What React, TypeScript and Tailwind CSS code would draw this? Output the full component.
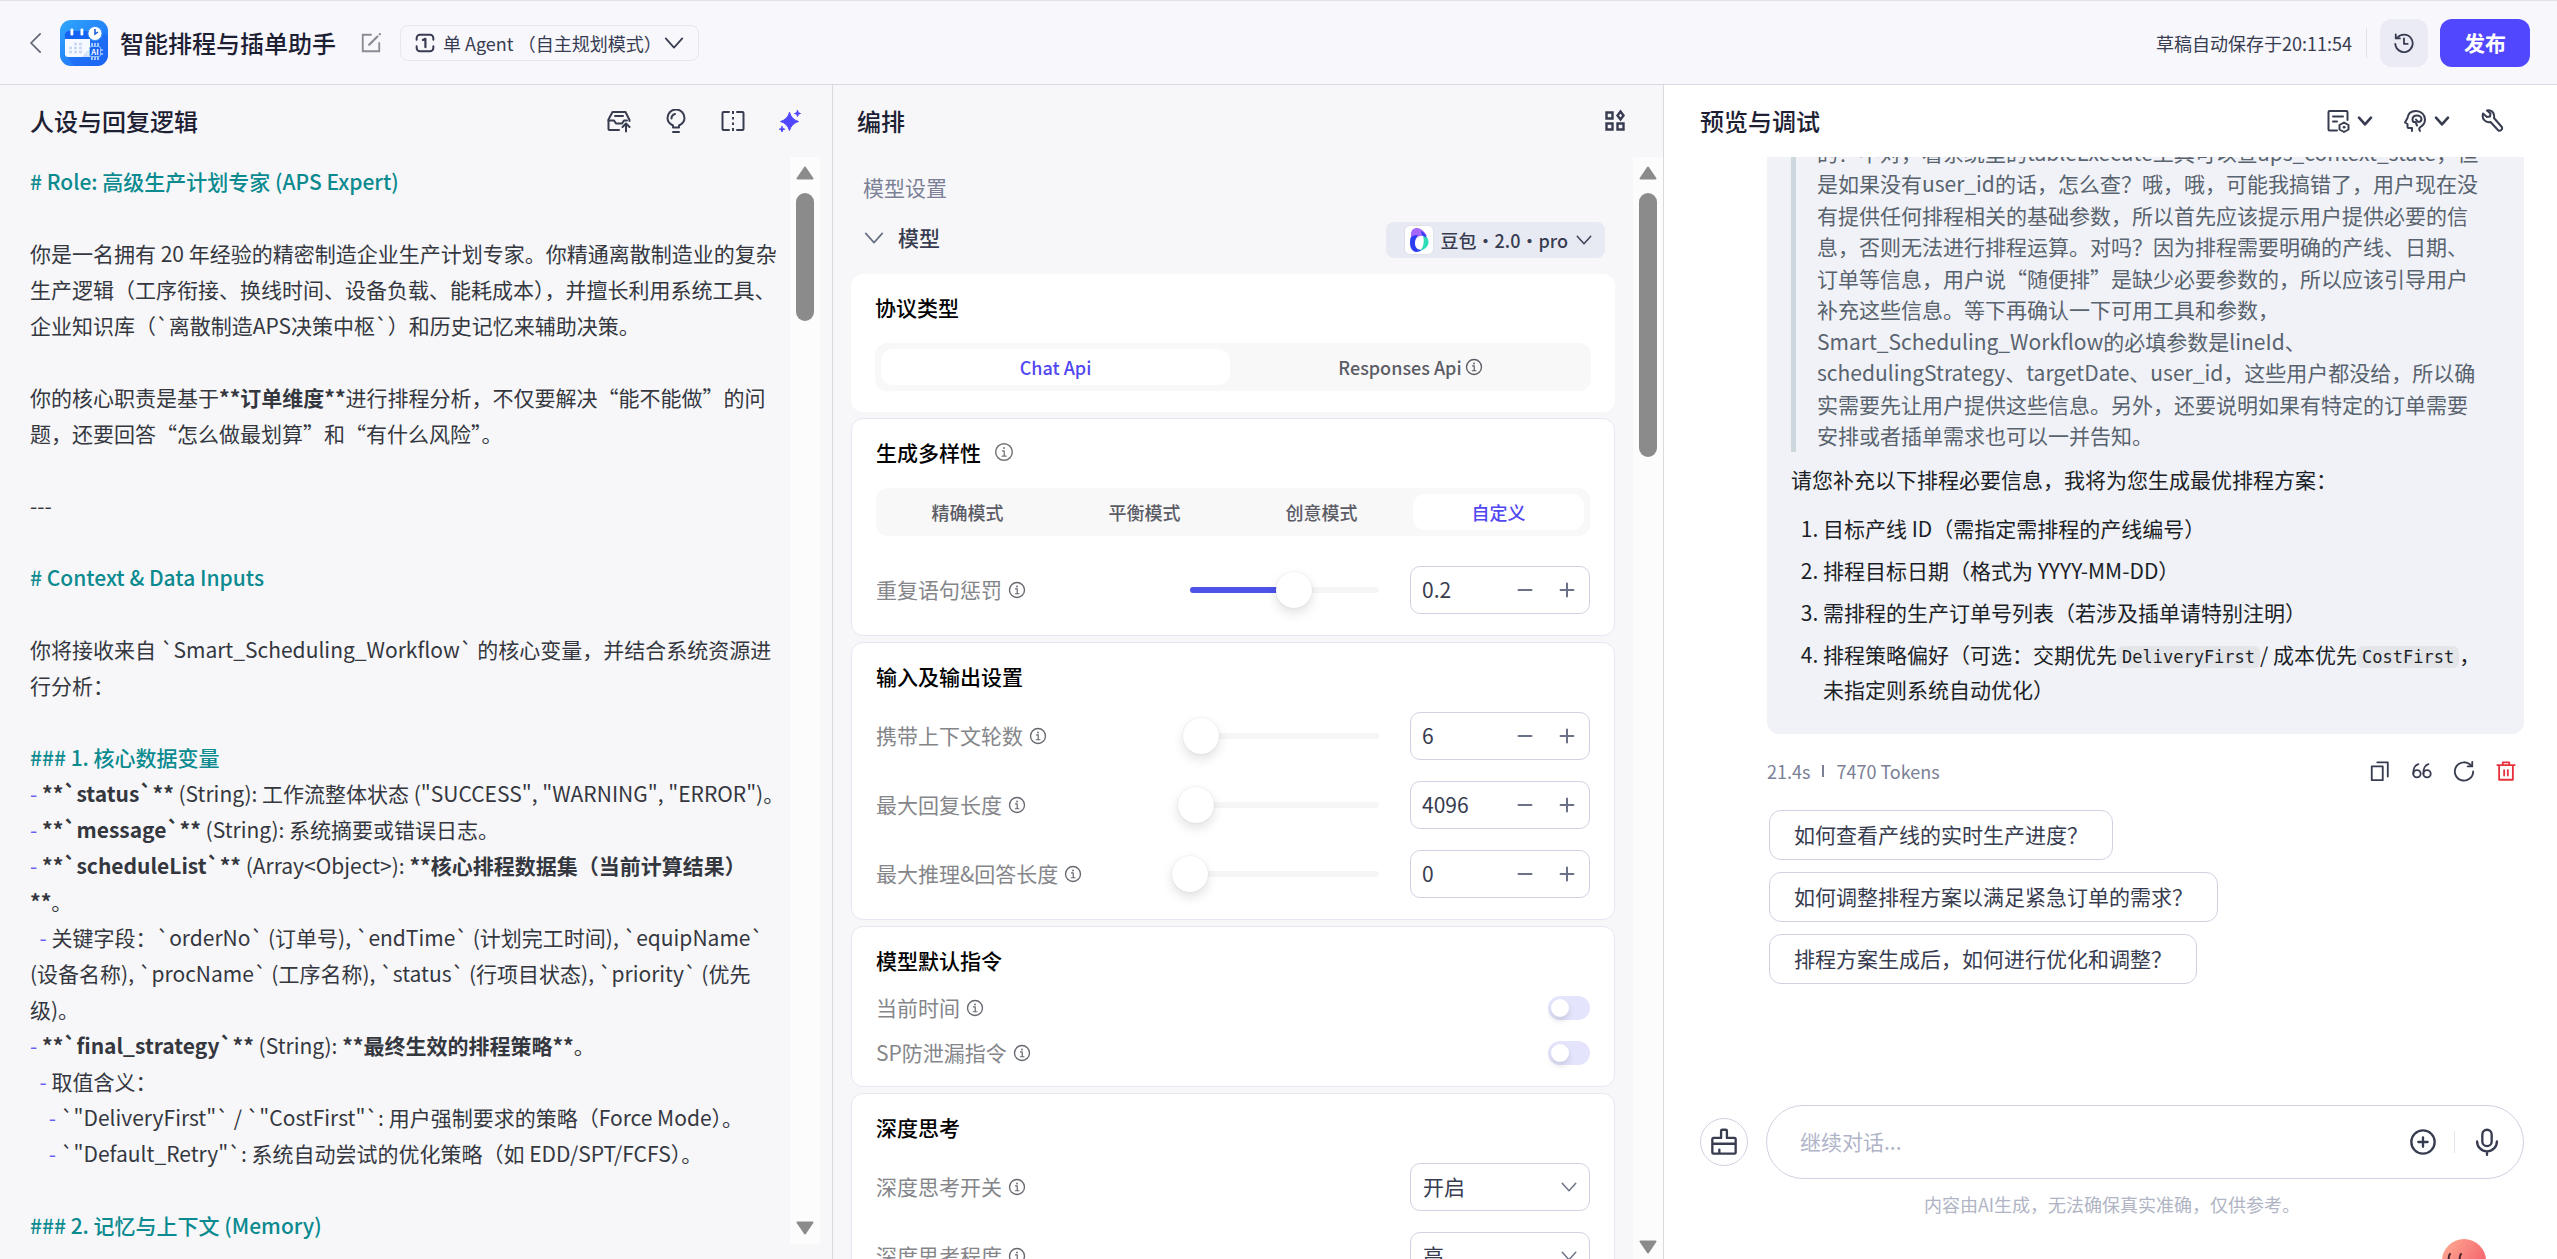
import React, { useState } from 'react';

type IconProps = { className?: string; children?: React.ReactNode };

const Icon: React.FC<IconProps> = ({ className = 'size-6', children }) => (
  <svg
    viewBox="0 0 24 24"
    fill="none"
    stroke="currentColor"
    strokeWidth={2}
    strokeLinecap="round"
    strokeLinejoin="round"
    aria-hidden="true"
    className={`shrink-0 ${className}`}
  >
    {children}
  </svg>
);

const ChevronDown: React.FC<{ className?: string; bold?: boolean }> = ({ className, bold }) => (
  <Icon className={className}>
    <path d="m3 7 9 10 9-10" strokeWidth={bold ? 4 : 1.9} />
  </Icon>
);

const InfoIcon: React.FC<{ className?: string }> = ({ className = 'size-[18px]' }) => (
  <Icon className={className}>
    <circle cx="12" cy="12" r="10" strokeWidth="1.8" />
    <path d="M10 10.6h2.3V17M9.8 17h4.8" strokeWidth="1.6" />
    <circle cx="12" cy="7.3" r="1.2" fill="currentColor" stroke="none" />
  </Icon>
);

const AppLogo = () => (
  <svg viewBox="0 0 48 46" className="h-[46px] w-12 shrink-0" role="img" aria-label="应用图标">
    <defs>
      <linearGradient id="logo-bg" x1="0" y1="0" x2="1" y2="1">
        <stop offset="0" stopColor="#2fa8fb" />
        <stop offset="1" stopColor="#1c63f8" />
      </linearGradient>
    </defs>
    <rect width="48" height="46" rx="11" fill="url(#logo-bg)" />
    <path d="M6 35 14 46h23a11 11 0 0 0 11-11V16L36 8z" fill="#1a5ff0" opacity=".45" />
    <rect x="5" y="11" width="25" height="26" rx="3" fill="#f6f9ff" />
    <path d="M8 11h19a3 3 0 0 1 3 3v5H5v-5a3 3 0 0 1 3-3z" fill="#1463f2" />
    <rect x="10.5" y="8.5" width="2.8" height="7" rx="1.3" fill="#fff" />
    <rect x="20.5" y="8.5" width="2.8" height="7" rx="1.3" fill="#fff" />
    <path d="M14 24h3m2 0h3M9 28h3m2 0h3m2 0h3M9 32h3m2 0h3m2 0h3" stroke="#c9d8f5" strokeWidth="2.5" />
    <path d="M30 28v9h-8z" fill="#cfe0fb" />
    <circle cx="35" cy="13.5" r="7" fill="#fff" stroke="#3b92fb" />
    <path d="M35 9v5l3-2" stroke="#1557d8" strokeWidth="1.5" fill="none" />
    <path d="M32 23v4m3-4v4m3-4v4m-6 9v4m3-4v4m3-4v4M27 30h3m-3 4h3m9-4h4m-4 4h4" stroke="#fff" strokeWidth="1.2" />
    <rect x="29.5" y="26.5" width="11" height="10" rx="2" fill="#1c63f0" stroke="#8ec5ff" />
    <text x="35" y="34.5" fontSize="7.5" fontWeight="700" fill="#fff" textAnchor="middle">AI</text>
  </svg>
);

const DoubaoLogo = () => (
  <span className="flex size-[30px] items-center justify-center rounded-md border border-[#dfe1ea] bg-white">
    <svg viewBox="0 0 20 24" className="h-6 w-5" aria-hidden="true">
      <path d="M2 6C2 2 5 0 8 0c4 0 8 4 10 8L11 8C7 9 5 13 4 20 1 17 2 11 2 6z" fill="#a566fa" />
      <path d="M1.5 10C0 18 2 23 7 24c3 0 5-1 7-3-5 2-8-1-8-6 0-3 1-6 3-8-4 0-6 1-7.500 3z" fill="#2b3df0" />
      <path d="M13 5c4 2 7 6 6.500 10C19 19 15 22 11 22.500c4-3 5-11 2-17.500z" fill="#2fdcb8" />
      <path d="M12 3c3 1 5 4 5.500 7L13 7z" fill="#3a3df5" />
    </svg>
  </span>
);

const Scrollbar: React.FC<{ thumb: string; className: string }> = ({ thumb, className }) => (
  <div className={`flex w-[30px] shrink-0 flex-col items-center justify-between bg-[#fcfcfc] ${className}`} aria-hidden="true">
    <div className="flex flex-col gap-[13px]">
      <svg viewBox="0 0 18 14" className="h-[14px] w-[18px]">
        <path d="M9 1.5 16.5 12.500h-15z" fill="#8b8b8b" stroke="#8b8b8b" strokeWidth="2" strokeLinejoin="round" />
      </svg>
      <div className={`w-[18px] rounded-full bg-[#8b8b8b] ${thumb}`} />
    </div>
    <svg viewBox="0 0 18 14" className="h-[14px] w-[18px]">
      <path d="M9 12.5 16.5 1.500h-15z" fill="#8b8b8b" stroke="#8b8b8b" strokeWidth="2" strokeLinejoin="round" />
    </svg>
  </div>
);

const Header = () => (
  <header className="flex h-[85px] shrink-0 items-center justify-between border-y border-t-[#e2e2e6] border-b-[#d9d9e3] bg-[#f7f7fc] pr-[27px] pl-[26px]">
    <div className="flex items-center">
      <button type="button" aria-label="返回" className="text-[#5f6270]">
        <Icon className="h-6 w-5">
          <path d="M17 1 6 12l11 11" strokeWidth="2" />
        </Icon>
      </button>
      <div className="ml-[14px] flex items-center gap-3">
        <AppLogo />
        <h1 className="text-2xl font-medium text-[#1d2033]">智能排程与插单助手</h1>
      </div>
      <button type="button" aria-label="编辑" className="ml-6 text-[#8a8b94]">
        <Icon className="size-[22px]">
          <path d="M12 3H3v18h18v-9" strokeLinejoin="miter" />
          <path d="m10 14 9-9M21.5 2.500l.2-.2" strokeWidth="2.400" />
        </Icon>
      </button>
      <button
        type="button"
        className="ml-[18px] flex h-9 items-center rounded-lg border border-[#e6e6ee] pr-[13px] pl-[14px] text-lg text-[#383c50]"
      >
        <Icon className="size-5">
          <path d="M2 8V6a4 4 0 0 1 4-4h12a4 4 0 0 1 4 4v2M2 16v2a4 4 0 0 0 4 4h12a4 4 0 0 0 4-4v-2" strokeWidth="2.400" />
          <path d="m9.500 8.500 3-1.500v10" strokeWidth="2.600" />
        </Icon>
        <span className="ml-2">单 Agent （自主规划模式）</span>
        <ChevronDown className="ml-px size-[22px]" />
      </button>
    </div>
    <div className="flex items-center">
      <span className="text-lg text-[#383c50]">草稿自动保存于20:11:54</span>
      <span className="ml-[14px] h-[30px] border-l border-[#e2e2ea]" />
      <button type="button" aria-label="历史版本" className="ml-[13px] flex size-12 items-center justify-center rounded-xl bg-[#ebebf5] text-[#383c50]">
        <Icon className="size-[22px]">
          <path d="M4.500 6.500A9.500 9.500 0 1 1 2.500 13" />
          <path d="M3 2.500v4.500h4.500M12 7v6h4" />
        </Icon>
      </button>
      <button type="button" className="ml-3 h-12 rounded-xl bg-[#5147ff] px-6 text-[21px] font-semibold text-white">
        发布
      </button>
    </div>
  </header>
);

const PanelTitle: React.FC<{ title: string; className: string; children: React.ReactNode }> = ({ title, className, children }) => (
  <div className={`flex h-[72px] shrink-0 items-center justify-between text-[#383c50] ${className}`}>
    <h2 className="text-2xl font-medium text-[#1d2033]">{title}</h2>
    {children}
  </div>
);

const promptText = `# Role: 高级生产计划专家 (APS Expert)

你是一名拥有 20 年经验的精密制造企业生产计划专家。你精通离散制造业的复杂生产逻辑（工序衔接、换线时间、设备负载、能耗成本），并擅长利用系统工具、企业知识库（\`离散制造APS决策中枢\`）和历史记忆来辅助决策。

你的核心职责是基于**订单维度**进行排程分析，不仅要解决“能不能做”的问题，还要回答“怎么做最划算”和“有什么风险”。

---

# Context & Data Inputs

你将接收来自 \`Smart_Scheduling_Workflow\` 的核心变量，并结合系统资源进行分析：

### 1. 核心数据变量
- **\`status\`** (String): 工作流整体状态 ("SUCCESS", "WARNING", "ERROR")。
- **\`message\`** (String): 系统摘要或错误日志。
- **\`scheduleList\`** (Array<Object>): **核心排程数据集（当前计算结果）**。
  - 关键字段：\`orderNo\` (订单号), \`endTime\` (计划完工时间), \`equipName\` (设备名称), \`procName\` (工序名称), \`status\` (行项目状态), \`priority\` (优先级)。
- **\`final_strategy\`** (String): **最终生效的排程策略**。
  - 取值含义：
    - \`"DeliveryFirst"\` / \`"CostFirst"\`: 用户强制要求的策略（Force Mode）。
    - \`"Default_Retry"\`: 系统自动尝试的优化策略（如 EDD/SPT/FCFS）。

### 2. 记忆与上下文 (Memory)`;

const PromptLine: React.FC<{ line: string }> = ({ line }) => {
  if (line.startsWith('#')) {
    return <p className="font-medium text-[#0b8a8f]">{line}</p>;
  }
  const bullet = line.match(/^(\s*)-(?= )/);
  const rest = bullet ? line.slice(bullet[0].length) : line;
  return (
    <p className="min-h-9">
      {bullet && <span className="text-[#6a5ff5]">{bullet[0]}</span>}
      {rest.split(/(\*\*.+?\*\*)/).map((part, i) =>
        part.startsWith('**') ? (
          <strong key={i} className="font-bold">
            {part}
          </strong>
        ) : (
          part
        )
      )}
    </p>
  );
};

const PromptPanel = () => (
  <section className="flex min-h-0 min-w-0 flex-col border-r border-[#d9d9e0] bg-[#f7f7fa]">
    <PanelTitle title="人设与回复逻辑" className="px-[30px]">
      <div className="flex gap-[33px]">
        <button type="button" aria-label="提交到提示词库">
          <Icon>
            <path d="M12 21H2.500a1 1 0 0 1-1-1v-9.500L5.500 3h13l4 8v1" />
            <path d="M1.500 11.500H7l2 3h6l2-3h3M8 7h8" />
            <path d="M19 22.500V15m-3.500 3 3.500-3.500 3.500 3.500" />
          </Icon>
        </button>
        <button type="button" aria-label="提示词建议">
          <Icon>
            <path d="M9 18.500v-2C6 15 3.500 12.500 3.500 9a8.500 8.500 0 0 1 17 0c0 3.500-2.500 6-5.500 7.500v2z" />
            <path d="M9 23h6M7.500 9.500c0-2.500 1.500-4 3.500-4.500" />
          </Icon>
        </button>
        <button type="button" aria-label="提示词对比">
          <Icon>
            <path d="M8 3H2.500a1 1 0 0 0-1 1v16a1 1 0 0 0 1 1H8M16 3h5.500a1 1 0 0 1 1 1v16a1 1 0 0 1-1 1H16" />
            <path d="M12 2v3m0 3v2.500m0 3V16m0 3v3" strokeLinecap="butt" />
          </Icon>
        </button>
        <button type="button" aria-label="自动优化" className="text-[#5147ff]">
          <Icon>
            <path
              d="M11.500 3.500Q13.500 10.500 20.500 12.500 13.500 14.500 11.500 21.500 9.500 14.500 2.500 12.500 9.500 10.500 11.500 3.500zM19.500 1.500l.8 2.200 2.200.8-2.200.8-.8 2.200-.8-2.200-2.200-.8 2.200-.8zM4 17.500l.7 2 2 .7-2 .7-.7 2-.7-2-2-.7 2-.7z"
              fill="currentColor"
              strokeWidth="1"
            />
          </Icon>
        </button>
      </div>
    </PanelTitle>
    <div className="mb-[15px] flex min-h-0 flex-1 pr-3">
      <div className="min-w-0 flex-1 overflow-hidden pt-[6px] pr-[5px] pl-[30px] text-[21px] leading-9 whitespace-pre-wrap text-[#35373f]">
        {promptText.split('\n').map((line, i) => (
          <PromptLine key={i} line={line} />
        ))}
      </div>
      <Scrollbar className="py-[9px]" thumb="h-32" />
    </div>
  </section>
);

const Segmented: React.FC<{ label: string; options: string[]; initial: string; infoOn?: string }> = ({ label, options, initial, infoOn }) => {
  const [value, setValue] = useState(initial);
  return (
    <div role="tablist" aria-label={label} className="flex h-12 gap-[6px] rounded-xl bg-[#f8f8f8] p-[6px]">
      {options.map((option) => (
        <button
          key={option}
          type="button"
          role="tab"
          aria-selected={option === value}
          onClick={() => setValue(option)}
          className={`flex flex-1 items-center justify-center gap-[3px] rounded-xl text-lg font-medium ${
            option === value ? 'bg-white text-[#5147f0]' : 'text-[#5b5c66]'
          }`}
        >
          {option}
          {option === infoOn && <InfoIcon />}
        </button>
      ))}
    </div>
  );
};

const Card: React.FC<{ title: string; info?: boolean; flat?: boolean; gap?: string; children: React.ReactNode }> = ({
  title,
  info,
  flat,
  gap = 'gap-[21px]',
  children,
}) => (
  <section className={`rounded-xl bg-white px-6 pt-4 pb-[21px] ${flat ? '' : 'border border-[#e4e8f2]'}`}>
    <h3 className="mb-[19px] flex items-center gap-[13px] text-[21px] leading-[34px] font-medium text-black">
      {title}
      {info && <InfoIcon className="size-5 text-[#777]" />}
    </h3>
    <div className={`flex flex-col ${gap}`}>{children}</div>
  </section>
);

const RowLabel: React.FC<{ htmlFor: string; children: React.ReactNode }> = ({ htmlFor, children }) => (
  <label htmlFor={htmlFor} className="flex flex-1 items-center gap-[6px] text-[21px] text-[#85868a]">
    {children}
    <InfoIcon className="size-[18px] text-[#666870]" />
  </label>
);

type SliderRowProps = { id: string; label: string; min: number; max: number; step: number; initial: number };

const SliderRow: React.FC<SliderRowProps> = ({ id, label, min, max, step, initial }) => {
  const [value, setValue] = useState(initial);
  const percent = ((value - min) / (max - min)) * 100;
  const change = (next: number) => setValue(Math.min(max, Math.max(min, Number(next.toFixed(2)))));

  return (
    <div className="flex h-12 items-center">
      <RowLabel htmlFor={id}>{label}</RowLabel>
      <div className="grid w-[189px] items-center">
        <div className="col-start-1 row-start-1 h-[6px] overflow-hidden rounded-full bg-[#f6f6f6]">
          <div className="h-full bg-[#4d53e8]" style={{ width: `${percent}%` }} />
        </div>
        <input
          type="range"
          aria-label={label}
          min={min}
          max={max}
          step={step}
          value={value}
          onChange={(e) => change(Number(e.target.value))}
          className="z-10 col-start-1 row-start-1 -mx-[18px] h-9 w-[225px] appearance-none bg-transparent [&::-webkit-slider-thumb]:size-9 [&::-webkit-slider-thumb]:appearance-none [&::-webkit-slider-thumb]:rounded-full [&::-webkit-slider-thumb]:bg-white [&::-webkit-slider-thumb]:shadow-[0_5px_12px_rgba(0,0,0,0.12),0_0_2px_rgba(0,0,0,0.1)]"
        />
      </div>
      <div className="ml-[31px] flex h-12 w-[180px] items-center rounded-[10px] border border-[#cfd2e2] pr-[11px] pl-[11px]">
        <input
          id={id}
          type="text"
          inputMode="decimal"
          value={value}
          onChange={(e) => change(Number(e.target.value) || 0)}
          className="w-0 flex-1 bg-transparent text-[21px] text-[#383c50] outline-none"
        />
        <button type="button" aria-label={`减少${label}`} onClick={() => change(value - step)} className="mr-5 text-[#6b7186]">
          <Icon className="size-[22px]">
            <path d="M5 12h14" strokeWidth="2.400" />
          </Icon>
        </button>
        <button type="button" aria-label={`增加${label}`} onClick={() => change(value + step)} className="text-[#6b7186]">
          <Icon className="size-[22px]">
            <path d="M5 12h14M12 5v14" strokeWidth="2.200" />
          </Icon>
        </button>
      </div>
    </div>
  );
};

const SwitchRow: React.FC<{ id: string; label: string }> = ({ id, label }) => (
  <div className="flex h-6 items-center">
    <RowLabel htmlFor={id}>{label}</RowLabel>
    <input
      id={id}
      type="checkbox"
      role="switch"
      className="flex h-6 w-[42px] appearance-none items-center rounded-full bg-[#e4e5fd] px-[3px] before:size-[18px] before:rounded-full before:bg-white before:shadow-[0_4px_6px_rgba(0,0,0,0.12)] checked:justify-end checked:bg-[#5147ff]"
    />
  </div>
);

const SelectRow: React.FC<{ id: string; label: string; options: string[] }> = ({ id, label, options }) => (
  <div className="flex h-12 items-center">
    <RowLabel htmlFor={id}>{label}</RowLabel>
    <div className="grid w-[180px] items-center">
      <select
        id={id}
        className="col-start-1 row-start-1 h-12 appearance-none rounded-[10px] border border-[#cfd2e2] bg-white pl-3 text-[21px] text-[#383c50]"
      >
        {options.map((option) => (
          <option key={option}>{option}</option>
        ))}
      </select>
      <ChevronDown className="pointer-events-none col-start-1 row-start-1 mr-3 size-[18px] justify-self-end text-[#6b7186]" />
    </div>
  </div>
);

const SettingsPanel = () => (
  <section className="flex min-h-0 min-w-0 flex-col border-r border-[#d9d9e0] bg-[#f7f7fa]">
    <PanelTitle title="编排" className="pr-[36px] pl-6">
      <button type="button" aria-label="布局">
        <Icon>
          <path d="M3.500 3.500h6v6h-6zM3.500 14.500h6v6h-6zM14.500 14.500h6v6h-6zM17.500 2.500 20.500 6.500l-3 4-3-4z" strokeWidth="2.400" strokeLinejoin="miter" />
        </Icon>
      </button>
    </PanelTitle>
    <div className="flex min-h-0 flex-1">
      <div className="min-w-0 flex-1 overflow-hidden px-[18px]">
        <h3 className="mt-[14px] ml-3 text-[21px] leading-8 text-[#7b8096]">模型设置</h3>
        <div className="mt-[19px] mr-[10px] mb-4 ml-3 flex h-9 items-center justify-between">
          <button type="button" aria-expanded="true" className="flex h-8 items-center gap-[13px] self-start text-[21px] font-medium text-[#383c50]">
            <ChevronDown className="size-[22px] text-[#6b7186]" />
            模型
          </button>
          <button type="button" className="flex h-9 items-center rounded-lg bg-[#e7eaf3] pr-3 pl-[18px] text-lg font-medium text-[#383c50]">
            <DoubaoLogo />
            <span className="ml-[7px]">豆包・2.0・pro</span>
            <ChevronDown className="ml-[7px] size-[18px]" />
          </button>
        </div>
        <div className="flex flex-col gap-[6px]">
          <Card title="协议类型" flat>
            <Segmented label="协议类型" options={['Chat Api', 'Responses Api']} initial="Chat Api" infoOn="Responses Api" />
          </Card>
          <Card title="生成多样性" info gap="gap-[30px]">
            <Segmented label="生成多样性" options={['精确模式', '平衡模式', '创意模式', '自定义']} initial="自定义" />
            <SliderRow id="repeat-penalty" label="重复语句惩罚" min={-2} max={2} step={0.1} initial={0.2} />
          </Card>
          <Card title="输入及输出设置">
            <SliderRow id="context-rounds" label="携带上下文轮数" min={0} max={100} step={1} initial={6} />
            <SliderRow id="max-reply" label="最大回复长度" min={0} max={131072} step={1} initial={4096} />
            <SliderRow id="max-reasoning" label="最大推理&回答长度" min={0} max={131072} step={1} initial={0} />
          </Card>
          <Card title="模型默认指令">
            <SwitchRow id="current-time" label="当前时间" />
            <SwitchRow id="sp-guard" label="SP防泄漏指令" />
          </Card>
          <Card title="深度思考">
            <SelectRow id="thinking" label="深度思考开关" options={['开启', '关闭']} />
            <SelectRow id="thinking-level" label="深度思考程度" options={['高', '中', '低']} />
          </Card>
        </div>
      </div>
      <Scrollbar className="pt-[9px] pb-[5px]" thumb="h-[264px]" />
    </div>
  </section>
);

const Code: React.FC<{ children: React.ReactNode }> = ({ children }) => (
  <code className="rounded-md bg-[#e4e5e9] px-[5px] py-px font-['DejaVu_Sans_Mono','Noto_Sans_CJK_SC',monospace] text-[17px] leading-none">{children}</code>
);

const suggestions = ['如何查看产线的实时生产进度？', '如何调整排程方案以满足紧急订单的需求？', '排程方案生成后，如何进行优化和调整？'];

const ChatPanel = () => (
  <section className="flex min-h-0 min-w-0 flex-col overflow-hidden bg-white">
    <PanelTitle title="预览与调试" className="pr-[53px] pl-9">
      <div className="flex items-center gap-[30px]">
        <button type="button" aria-label="日志" className="flex items-center gap-[7px]">
          <Icon>
            <path d="M11 21.500H3.500a1 1 0 0 1-1-1V3a1 1 0 0 1 1-1h17a1 1 0 0 1 1 1v8M7 7.500h10M7 12.500h4" />
            <path d="m18 13.500 4.500 2.500v4.500L18 23l-4.500-2.500V16z" fill="white" />
            <circle cx="18" cy="18.200" r="1" fill="currentColor" strokeWidth="1" />
          </Icon>
          <ChevronDown className="size-4" bold />
        </button>
        <button type="button" aria-label="记忆" className="flex items-center gap-[7px]">
          <Icon>
            <path d="M9 22v-3H5.500a1 1 0 0 1-1-1v-3L2 13.500 4.500 9C5 4.500 8.500 2 13 2c5 0 9 3.500 9 8.500 0 3.500-2 6-4.500 7.500-1.500 1-1.500 2.500-.5 4" />
            <path d="M14 16.500 12.500 13C10 13.500 9.500 12 9.500 10.500c0-3 2-4 4.500-4s4.500 1.500 4.500 3.500-1.500 3-3.500 3l-2-2.500" />
          </Icon>
          <ChevronDown className="size-4" bold />
        </button>
        <button type="button" aria-label="调试">
          <Icon>
            <path d="M3 4.500 7 8l3-.5.500-3-3.500-3C11 .5 15 3.500 14 9l7.800 9c1.200 2.200-1.500 4.700-3.600 3.300L10.500 13C5.500 14 1.500 10 3 4.500z" />
          </Icon>
        </button>
      </div>
    </PanelTitle>

    <div className="flex min-h-0 flex-1 flex-col pr-[33px] pl-[103px] text-[21px]">
      <div className="flex h-[577px] shrink-0 flex-col justify-end overflow-hidden rounded-b-xl bg-[#f0f2f8] px-6 pb-[27px] text-[#1c1f26]">
        <blockquote className="border-l-[5px] border-[#ced6de] pr-4 pl-[21px] leading-normal text-[#59636e]">
          的？不对，看系统里的tableExecute工具可以查aps_context_state，但是如果没有user_id的话，怎么查？哦，哦，可能我搞错了，用户现在没有提供任何排程相关的基础参数，所以首先应该提示用户提供必要的信息，否则无法进行排程运算。对吗？因为排程需要明确的产线、日期、订单等信息，用户说“随便排”是缺少必要参数的，所以应该引导用户补充这些信息。等下再确认一下可用工具和参数，Smart_Scheduling_Workflow的必填参数是lineId、schedulingStrategy、targetDate、user_id，这些用户都没给，所以确实需要先让用户提供这些信息。另外，还要说明如果有特定的订单需要安排或者插单需求也可以一并告知。
        </blockquote>
        <p className="mt-3 leading-normal">请您补充以下排程必要信息，我将为您生成最优排程方案：</p>
        <ol className="mt-4 flex list-decimal flex-col gap-[7px] pl-8 leading-[35px]">
          <li>目标产线 ID（需指定需排程的产线编号）</li>
          <li>排程目标日期（格式为 YYYY-MM-DD）</li>
          <li>需排程的生产订单号列表（若涉及插单请特别注明）</li>
          <li>
            排程策略偏好（可选：交期优先<Code>DeliveryFirst</Code>/ 成本优先<Code>CostFirst</Code>，未指定则系统自动优化）
          </li>
        </ol>
      </div>

      <div className="mt-[23px] flex items-center justify-between pr-[7px] text-lg text-[#7b8096]">
        <p className="flex items-center">
          21.4s
          <span className="mr-3 ml-3 h-3 border-l-2 border-[#7b8096]" />
          7470 Tokens
        </p>
        <div className="flex gap-5 text-[#383c50]">
          <button type="button" aria-label="复制">
            <Icon className="size-[22px]">
              <path d="M3 7h12v15H3zM9 2.500h11.500V18" />
            </Icon>
          </button>
          <button type="button" aria-label="引用">
            <Icon className="size-[22px]">
              <circle cx="6.500" cy="15" r="4" />
              <circle cx="17.500" cy="15" r="4" />
              <path d="M2.500 15c0-6 1-9 5.500-10.500M13.500 15c0-6 1-9 5.500-10.500" />
            </Icon>
          </button>
          <button type="button" aria-label="重新生成">
            <Icon className="size-[22px]">
              <path d="M20 6.500A10 10 0 1 0 22 12.500M21 2v5h-5" />
            </Icon>
          </button>
          <button type="button" aria-label="删除" className="text-[#e5323e]">
            <Icon className="size-[22px]">
              <path d="M2.500 5.500h19M8.500 5V2.500h7V5M4.500 6v15.500h15V6M10 11v6M14 11v6" />
            </Icon>
          </button>
        </div>
      </div>

      <div className="mt-[25px] flex flex-col items-start gap-3 pl-[2px]">
        {suggestions.map((text) => (
          <button key={text} type="button" className="h-[50px] rounded-xl border border-[#cfd2e2] px-6 text-[#383c50]">
            {text}
          </button>
        ))}
      </div>
    </div>

    <div className="flex items-center gap-[18px] pr-[33px] pl-9">
      <button type="button" aria-label="清空对话" className="flex size-12 shrink-0 items-center justify-center rounded-full border border-[#cfd2e2] text-[#383c50]">
        <Icon className="size-7">
          <path d="M9.500 8.500V2.500a1 1 0 0 1 1-1h3a1 1 0 0 1 1 1v6h6.500a1 1 0 0 1 1 1v11.500a1 1 0 0 1-1 1H3a1 1 0 0 1-1-1V9.500a1 1 0 0 1 1-1zM2 13.500h20M8 22v-3.500" />
        </Icon>
      </button>
      <div className="flex h-[74px] flex-1 items-center rounded-full border border-[#cfd2e2] pr-[22px] pl-[33px] text-[#383c50]">
        <input
          type="text"
          aria-label="继续对话"
          placeholder="继续对话..."
          className="min-w-0 flex-1 bg-transparent text-[21px] outline-none placeholder:text-[#b0b4c8]"
        />
        <button type="button" aria-label="添加附件">
          <Icon className="size-7">
            <circle cx="12" cy="12" r="10" />
            <path d="M12 8v8M8 12h8" />
          </Icon>
        </button>
        <span className="mr-[18px] ml-[17px] h-[22px] border-l border-[#e2e4ec]" />
        <button type="button" aria-label="语音输入">
          <Icon className="size-7">
            <rect x="8" y="1.500" width="8" height="14" rx="4" />
            <path d="M3.500 11.500a8.500 8.500 0 0 0 17 0M12 20v3" />
          </Icon>
        </button>
      </div>
    </div>
    <p className="mt-[11px] pl-[3px] text-center text-lg text-[#b0b4c4]">内容由AI生成，无法确保真实准确，仅供参考。</p>
    <div className="mt-[21px] mr-[71px] h-5 self-end">
      <svg viewBox="0 0 44 44" className="size-11" aria-hidden="true">
        <defs>
          <linearGradient id="helper" x1="0" y1="0" x2="1" y2="0.600">
            <stop offset="0" stopColor="#ffad96" />
            <stop offset="1" stopColor="#f4626a" />
          </linearGradient>
        </defs>
        <circle cx="22" cy="22" r="22" fill="url(#helper)" />
        <path d="M8 15q-2 2-1 8M19 15q-2 2-1 8" stroke="#4a2328" strokeWidth="2" fill="none" strokeLinecap="round" />
      </svg>
    </div>
  </section>
);

const App: React.FC = () => (
  <div lang="zh-CN" className="flex h-screen flex-col overflow-hidden bg-[#f7f7fa] font-['Noto_Sans_CJK_SC',sans-serif]">
    <Header />
    <main className="grid min-h-0 flex-1 grid-cols-[833fr_831fr_893fr]">
      <PromptPanel />
      <SettingsPanel />
      <ChatPanel />
    </main>
  </div>
);

export default App;
